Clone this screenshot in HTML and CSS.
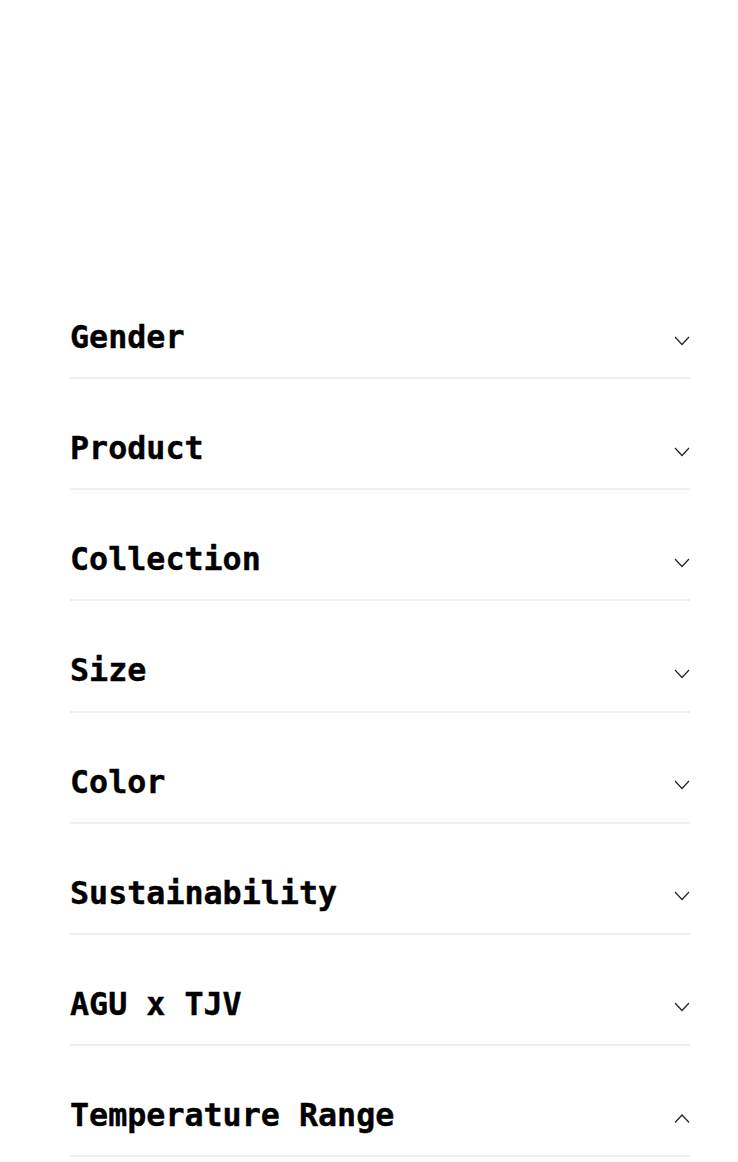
FILE: index.html
```html
<!DOCTYPE html>
<html lang="en">
<head>
    <meta charset="UTF-8">
    <meta name="viewport" content="width=device-width, initial-scale=1.0">
    <title>Filters</title>
    <link rel="stylesheet" href="styles.css">
</head>
<body>
<div class="filter-panel">
    <div class="filter-row">
        <h3>Gender</h3>
        <svg class="chevron" viewBox="0 0 16 16"><path d="M1 4 L8 11.5 L15 4"/></svg>
    </div>
    <div class="filter-row">
        <h3>Product</h3>
        <svg class="chevron" viewBox="0 0 16 16"><path d="M1 4 L8 11.5 L15 4"/></svg>
    </div>
    <div class="filter-row">
        <h3>Collection</h3>
        <svg class="chevron" viewBox="0 0 16 16"><path d="M1 4 L8 11.5 L15 4"/></svg>
    </div>
    <div class="filter-row">
        <h3>Size</h3>
        <svg class="chevron" viewBox="0 0 16 16"><path d="M1 4 L8 11.5 L15 4"/></svg>
    </div>
    <div class="filter-row">
        <h3>Color</h3>
        <svg class="chevron" viewBox="0 0 16 16"><path d="M1 4 L8 11.5 L15 4"/></svg>
    </div>
    <div class="filter-row">
        <h3>Sustainability</h3>
        <svg class="chevron" viewBox="0 0 16 16"><path d="M1 4 L8 11.5 L15 4"/></svg>
    </div>
    <div class="filter-row">
        <h3>AGU x TJV</h3>
        <svg class="chevron" viewBox="0 0 16 16"><path d="M1 4 L8 11.5 L15 4"/></svg>
    </div>
    <div class="filter-row open">
        <h3>Temperature Range</h3>
        <svg class="chevron" viewBox="0 0 16 16"><path d="M1 11.5 L8 4 L15 11.5"/></svg>
    </div>
</div>
</body>
</html>
```

FILE: styles.css
```css
body {
    margin: 0;
    background: #fff;
    font-family: "DejaVu Sans Mono", "Liberation Mono", monospace;
    color: #000;
}

.filter-panel {
    padding: 268px 48px 0 70px;
}

.filter-row {
    display: flex;
    justify-content: space-between;
    align-items: center;
    padding: 49px 0 19px;
    border-bottom: 2px solid #eeeeee;
}

.filter-row h3 {
    margin: 0;
    font-size: 31.7px;
    line-height: 41.14px;
    font-weight: bold;
    -webkit-text-stroke: 0.4px #000;
}

.chevron {
    width: 16px;
    height: 16px;
    margin-top: 6px;
    fill: none;
    stroke: #222;
    stroke-width: 1.2;
}
```
